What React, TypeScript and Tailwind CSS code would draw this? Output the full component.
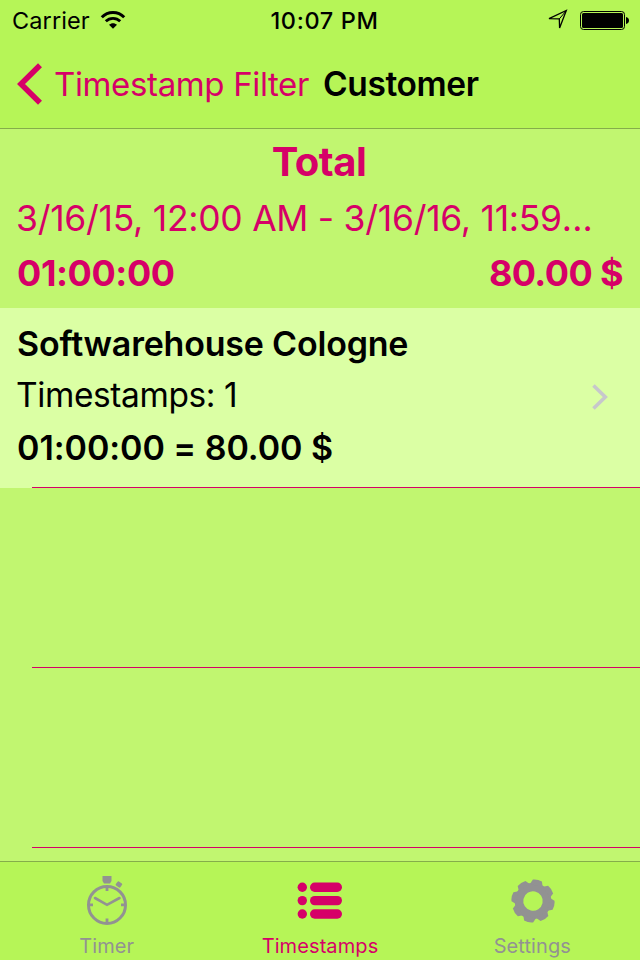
const FONT = "font-['Inter','Liberation_Sans',sans-serif]";

function StatusBar() {
  return (
    <div className="flex h-10 items-center text-[24px] leading-none text-black">
      <div className="flex flex-1 items-center pl-[12px]">
        <span className="pt-[2px] text-[23.5px] tracking-[0.1px]">Carrier</span>
        <svg className="ml-[10px]" width="26" height="20" viewBox="0 0 26 20" fill="none" stroke="#000">
          <path d="M1.800 7.200C8 .9 18 .9 24.200 7.200" strokeWidth="3" />
          <path d="M5.800 11.300c4-4 10.400-4 14.400 0" strokeWidth="2.800" />
          <path d="M13 18.800l-4-4c2.200-2.200 5.800-2.200 8 0z" fill="#000" stroke="none" />
        </svg>
      </div>
      <span className="ml-[8px] pt-[2px] text-[23.5px] font-medium tracking-[0.65px]">10:07 PM</span>
      <div className="flex flex-1 items-center justify-end pr-[11px]">
        <svg width="22" height="22" viewBox="0 0 22 22" fill="none" stroke="#000" strokeWidth="1.300">
          <path d="M2 9.600L19.300 1.500L12.600 19L12.300 9.900Z" />
          <path d="M12.300 9.900L19 2" strokeWidth="1" />
        </svg>
        <svg className="ml-[10px]" width="50" height="20" viewBox="0 0 50 20">
          <rect x="1.500" y="1.500" width="44" height="18" rx="3" fill="none" stroke="#000" />
          <rect x="3" y="3" width="41" height="15" rx="1.500" />
          <path d="M47 7c4 .5 4 6.500 0 7z" />
        </svg>
      </div>
    </div>
  );
}

function NavBar() {
  return (
    <div className="flex h-[88px] items-center pl-[16px] text-[34px] leading-none">
      <svg width="27" height="44" viewBox="0 0 27 44" fill="none" stroke="#d60068" strokeWidth="5.600">
        <path d="M24 3.200L5 22L24 40.800" />
      </svg>
      <span className="ml-[11px] whitespace-nowrap pt-px text-[33px] tracking-[-0.36px] text-[#d60068]">Timestamp Filter</span>
      <span className="ml-[14px] pt-px text-[33.5px] font-semibold tracking-[-0.4px] text-black">Customer</span>
    </div>
  );
}

function Summary() {
  return (
    <div className="h-[179px] px-[17px] pt-[7px] text-[#d60068]">
      <h1 className="pr-[2px] text-center text-[40px] font-bold leading-[52px] tracking-[-0.5px]">Total</h1>
      <p className="-ml-px mt-[5px] whitespace-nowrap text-[35.5px] leading-[52px] tracking-[-0.28px]">
        3/16/15, 12:00 AM - 3/16/16, 11:59<span className="tracking-[0.1px]">...</span>
      </p>
      <div className="mt-[2px] flex justify-between text-[36px] font-bold leading-[52px]">
        <span className="tracking-[-0.4px]">01:00:00</span>
        <span className="tracking-[-0.6px]">80.00 $</span>
      </div>
    </div>
  );
}

function CustomerRow() {
  return (
    <div className="flex h-[180px] flex-col bg-[#dbffa4]">
      <div className="flex flex-1 items-center justify-between pl-[17px] pr-[31px] text-[34px] text-black">
        <div className="pb-[3px] leading-[52px]">
          <h2 className="font-semibold tracking-[-0.2px]">Softwarehouse Cologne</h2>
          <p className="-ml-px -mt-px text-[33.5px] tracking-[-0.4px]">Timestamps: 1</p>
          <p className="mt-px font-semibold tracking-[-0.05px]">01:00:00 = 80.00 $</p>
        </div>
        <svg className="-mt-[2px]" width="17" height="26" viewBox="0 0 17 26" fill="none" stroke="#c7c7cc" strokeWidth="3.600">
          <path d="M1.500 1.500L13.300 13L1.500 24.500" />
        </svg>
      </div>
      <div className="ml-8 h-px bg-[#d60068]" />
    </div>
  );
}

function EmptyRow() {
  return <div className="ml-8 h-[180px] border-b border-[#d60068]" />;
}

function TimerIcon() {
  return (
    <svg width="44" height="52" viewBox="0 0 44 52" fill="none" stroke="#929292">
      <circle cx="22" cy="29.900" r="18.500" strokeWidth="3" />
      <path d="M17.500 1h9v5l-1.500 2.500h-6l-1.500-2.500z" fill="#929292" stroke="none" />
      <rect x="31.200" y="7" width="5.500" height="5" rx="1" transform="rotate(35 34 9.500)" fill="#929292" stroke="none" />
      <path d="M10 23L22 29.800L34.500 23" strokeWidth="2.600" strokeLinecap="round" />
      <path d="M22 12v4M22 43.500v4M4 29.900h4M36 29.900h4" strokeWidth="2.800" />
    </svg>
  );
}

function ListIcon() {
  return (
    <svg width="46" height="38" viewBox="0 0 46 38" fill="#d60068">
      {[5.200, 18.600, 32].map((y) => (
        <g key={y}>
          <circle cx="5.300" cy={y} r="4.700" />
          <rect x="13" y={y - 4.700} width="32" height="9.400" rx="4.700" />
        </g>
      ))}
    </svg>
  );
}

function GearIcon() {
  return (
    <svg width="44" height="44" viewBox="-22 -22 44 44">
      <g fill="none" stroke="#929292" transform="rotate(12)">
        <circle r="14" strokeWidth="8.500" />
        {[0, 45, 90, 135, 180, 225, 270, 315].map((a) => (
          <path key={a} d="M-6.500-16L-4.600-21Q0-22.500 4.600-21L6.500-16Z" transform={`rotate(${a})`} fill="#929292" stroke="none" />
        ))}
      </g>
    </svg>
  );
}

function TabBar() {
  return (
    <div className="grid h-[99px] grid-cols-3 border-t border-[#85ad4a] bg-[#b6f557] text-[20px] leading-none tracking-[0.1px] text-[#929292]">
      <div className="flex flex-col items-center">
        <div className="flex h-[74px] items-center pt-[4px]"><TimerIcon /></div>
        <span>Timer</span>
      </div>
      <div className="flex flex-col items-center text-[#d60068]">
        <div className="flex h-[74px] items-center pt-[3px]"><ListIcon /></div>
        <span>Timestamps</span>
      </div>
      <div className="flex flex-col items-center pr-[2px]">
        <div className="flex h-[74px] items-center pl-[2px] pt-[3px]"><GearIcon /></div>
        <span>Settings</span>
      </div>
    </div>
  );
}

export default function App() {
  return (
    <div className={`${FONT} flex h-[960px] w-[640px] flex-col overflow-hidden bg-[#c1f670]`}>
      <header className="h-[129px] border-b border-[#85ad4a] bg-[#b6f557]">
        <StatusBar />
        <NavBar />
      </header>
      <main className="min-h-0 flex-1 overflow-hidden">
        <Summary />
        <CustomerRow />
        <EmptyRow />
        <EmptyRow />
      </main>
      <TabBar />
    </div>
  );
}
